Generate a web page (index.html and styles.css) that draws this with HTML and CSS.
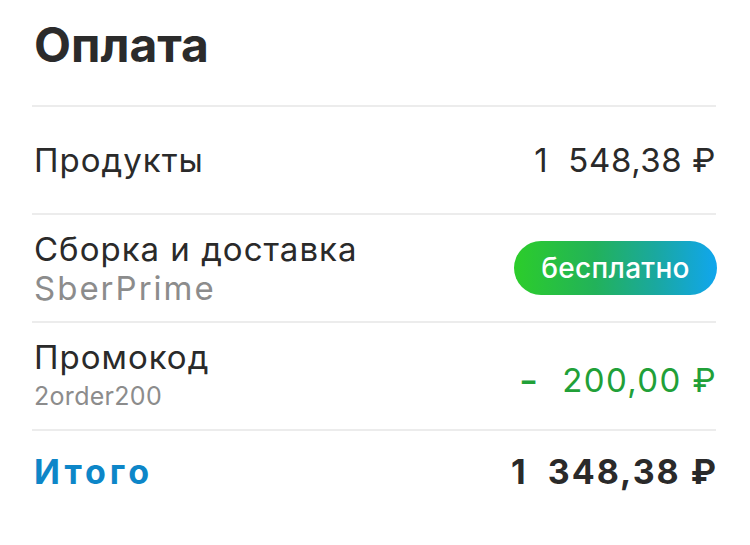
FILE: index.html
```html
<!DOCTYPE html>
<html lang="ru">
<head>
<meta charset="utf-8">
<title>Оплата</title>
<link rel="stylesheet" href="styles.css">
</head>
<body>
<div class="payment">
  <h1 class="title">Оплата</h1>
  <div class="row">
    <div class="label">
      <div class="main">Продукты</div>
    </div>
    <div class="amount"><span class="thousands">1</span>548,38&nbsp;₽</div>
  </div>
  <div class="row">
    <div class="label">
      <div class="main">Сборка и доставка</div>
      <div class="sub sub-big">SberPrime</div>
    </div>
    <div class="pill">бесплатно</div>
  </div>
  <div class="row">
    <div class="label">
      <div class="main">Промокод</div>
      <div class="sub sub-small">2order200</div>
    </div>
    <div class="amount discount"><span class="minus">-</span>200,00&nbsp;₽</div>
  </div>
  <div class="row total">
    <div class="label">
      <div class="main total-label">Итого</div>
    </div>
    <div class="amount total-amount"><span class="thousands">1</span>348,38&nbsp;₽</div>
  </div>
</div>
</body>
</html>
```

FILE: styles.css
```css
html, body {
  margin: 0;
  padding: 0;
  background: #ffffff;
}
body {
  font-family: Inter, "Noto Sans", sans-serif;
  color: #2a2a2a;
  width: 750px;
  height: 545px;
  overflow: hidden;
}
.payment {
  padding: 0 34px 0 32px;
}
.title {
  margin: 0;
  height: 105px;
  box-sizing: border-box;
  padding: 17px 0 0 2px;
  font-size: 48px;
  line-height: 56px;
  font-weight: 700;
  color: #2b2b2b;
}
.row {
  border-top: 2px solid #ececec;
  height: 108px;
  box-sizing: border-box;
  display: flex;
  align-items: center;
  justify-content: space-between;
  padding-left: 2px;
}
.label {
  display: flex;
  flex-direction: column;
}
.main {
  font-size: 33px;
  line-height: 40px;
  font-weight: 400;
  letter-spacing: 1px;
}
.sub {
  color: #8c8c8c;
}
.sub-big {
  font-size: 33px;
  line-height: 38px;
  letter-spacing: 2px;
}
.sub-small {
  font-size: 25px;
  line-height: 38px;
  letter-spacing: 0.3px;
}
.amount {
  font-size: 33px;
  line-height: 40px;
  font-weight: 400;
  letter-spacing: 0.6px;
  white-space: nowrap;
}
.thousands {
  margin-right: 20px;
}
.minus {
  display: inline-block;
  font-weight: 600;
  transform: scaleX(1.25);
  margin-right: 24px;
}
.discount {
  color: #21a038;
  margin-top: 8px;
  letter-spacing: 1.4px;
  margin-right: -1px;
}
.pill {
  width: 203px;
  height: 54px;
  border-radius: 27px;
  background: linear-gradient(90deg, #2ccd2a 0%, #22b25a 40%, #1aa8a0 70%, #10a6ee 100%);
  color: #ffffff;
  font-size: 28px;
  font-weight: 500;
  letter-spacing: 0.3px;
  display: flex;
  align-items: center;
  justify-content: center;
  margin-right: -1px;
}
.total {
  height: 85px;
  align-items: flex-start;
  padding-top: 21px;
}
.total-label {
  color: #0d86c8;
  font-weight: 700;
  font-size: 34px;
  letter-spacing: 4px;
}
.total-amount {
  font-weight: 700;
  font-size: 34px;
  letter-spacing: 2px;
  margin-right: -2px;
}
```
